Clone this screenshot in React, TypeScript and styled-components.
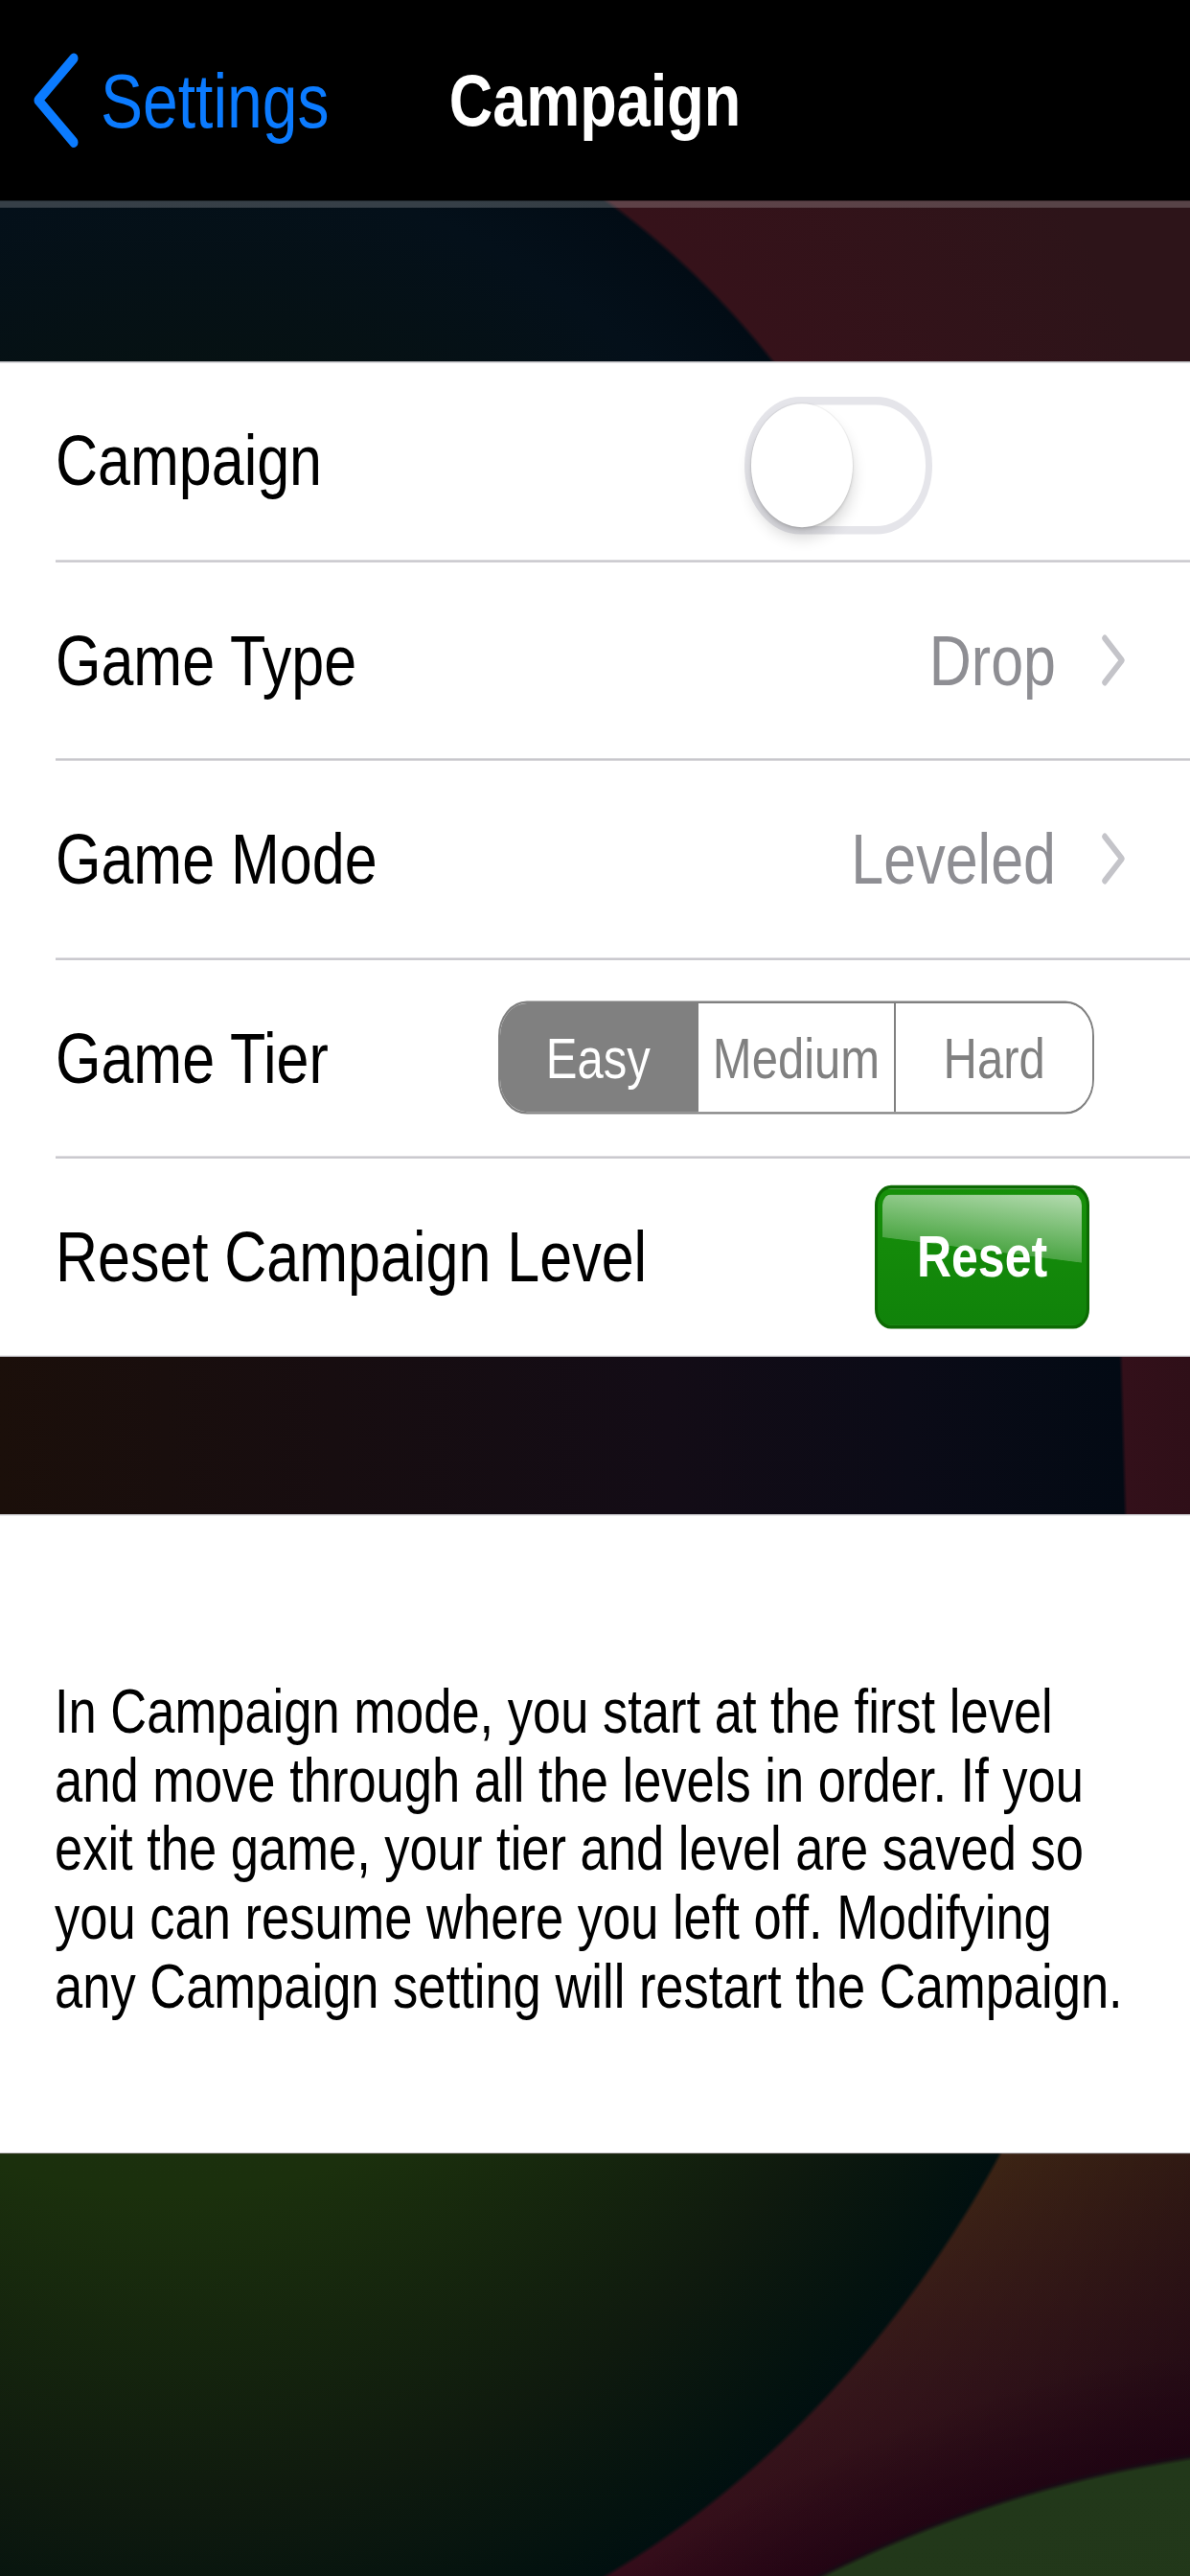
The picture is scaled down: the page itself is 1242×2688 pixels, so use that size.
import React from 'react'
import styled, { createGlobalStyle } from 'styled-components'

// the screen is laid out at 1242x2208 and stretched to fill the 2688px tall display
const STRETCH = 2688 / 2208
const SEPARATOR = '#c8c7cc'

const GlobalStyle = createGlobalStyle`
  html, body {
    margin: 0;
    padding: 0;
    background: #000;
  }
  body {
    font-family: 'Liberation Sans', Arial, Helvetica, sans-serif;
    -webkit-font-smoothing: antialiased;
  }
  * {
    box-sizing: border-box;
  }
`

const Page = styled.div`
  width: 1242px;
  height: 2688px;
  overflow: hidden;
  background: #000;
`

const Screen = styled.div`
  width: 1242px;
  height: 2208px;
  display: flex;
  flex-direction: column;
  transform: scaleY(${STRETCH});
  transform-origin: top left;
`

const NavBar = styled.header`
  flex: none;
  height: 172px;
  display: grid;
  grid-template-columns: 1fr auto 1fr;
  align-items: center;
  background: #000;
`

const BackButton = styled.button`
  justify-self: start;
  display: flex;
  align-items: center;
  gap: 22px;
  margin-left: 31px;
  padding: 0;
  border: none;
  background: none;
  color: #0b7bff;
  font-family: inherit;
  font-size: 66px;
  cursor: pointer;
`

const Title = styled.h1`
  margin: 0;
  color: #fff;
  font-size: 63px;
  font-weight: 700;
`

// wallpaper strips that show between the grouped sections
const TopBand = styled.div`
  flex: none;
  height: 138px;
  box-shadow: inset 0 6px 0 rgba(255, 255, 255, 0.2);
  background: radial-gradient(
    circle at 209px 715px,
    #0b1510 0,
    #07120f 480px,
    #04101a 740px,
    #020c15 829px,
    #36121a 833px,
    #2d1419 1150px
  );
`

const MidBand = styled.div`
  flex: none;
  height: 135.5px;
  background: linear-gradient(
    88deg,
    #1b0f0a 0,
    #170d10 350px,
    #130c16 700px,
    #0b0b17 950px,
    #030a14 1172px,
    #33101a 1176px,
    #2f0f18 100%
  );
`

const BottomBand = styled.div`
  flex: 1;
  background:
    radial-gradient(
      circle at 1428px 1748px,
      #1d3214 0,
      #22381a 1496px,
      #190b14 1500px,
      rgba(26, 0, 16, 0.55) 1503px,
      rgba(26, 0, 16, 0) 1590px
    ),
    radial-gradient(
      circle at 174px -575px,
      #1c330f 0,
      #1b300d 610px,
      #0f1a0e 875px,
      #03120f 1010px,
      #011010 1041px,
      rgba(20, 0, 16, 0) 1045px,
      rgba(20, 0, 16, 0.45) 1300px,
      rgba(20, 0, 16, 0.7) 1600px
    ),
    linear-gradient(to bottom, #3c2414 0, #35161a 200px, #340c1a 362px);
`

const Group = styled.section`
  flex: none;
  background: #fff;
  border-top: 1px solid ${SEPARATOR};
  border-bottom: 1px solid ${SEPARATOR};
`

const Row = styled.div`
  padding-left: 58px;
`

const RowBody = styled.div<{ $last?: boolean }>`
  height: ${p => (p.$last ? 168.5 : 170.5)}px;
  display: flex;
  align-items: center;
  justify-content: space-between;
  border-bottom: ${p => (p.$last ? 'none' : `2px solid ${SEPARATOR}`)};
`

const Label = styled.span`
  color: #000;
  font-size: 61px;
`

const Trailing = styled.div<{ $inset: number; $drop?: number }>`
  display: flex;
  align-items: center;
  margin-right: ${p => p.$inset}px;
  margin-top: ${p => p.$drop ?? 0}px;
`

const Value = styled.span`
  color: #8e8e93;
  font-size: 61px;
  margin-right: 45px;
`

const Track = styled.div<{ $on?: boolean }>`
  width: 196px;
  height: 118px;
  display: flex;
  align-items: center;
  justify-content: ${p => (p.$on ? 'flex-end' : 'flex-start')};
  border: 7px solid ${p => (p.$on ? '#4cd964' : '#e5e5ea')};
  border-radius: 59px;
  background: ${p => (p.$on ? '#4cd964' : '#fff')};
`

const Knob = styled.span`
  flex: none;
  width: 106px;
  height: 106px;
  border-radius: 50%;
  background: #fff;
  box-shadow:
    0 9px 14px rgba(0, 0, 0, 0.16),
    0 2px 3px rgba(0, 0, 0, 0.1),
    0 0 0 1px rgba(0, 0, 0, 0.04);
`

const Segmented = styled.div`
  width: 622px;
  height: 97px;
  display: flex;
  overflow: hidden;
  border: 2.5px solid #808080;
  border-radius: 30px;
`

const Segment = styled.button<{ $active?: boolean }>`
  flex: 1;
  display: flex;
  align-items: center;
  justify-content: center;
  padding: 0;
  border: none;
  background: ${p => (p.$active ? '#808080' : '#fff')};
  color: ${p => (p.$active ? '#fff' : '#808080')};
  font-family: inherit;
  font-size: 49px;
  cursor: pointer;

  & + & {
    border-left: 2.5px solid #808080;
  }
`

const ResetButton = styled.button`
  width: 224px;
  height: 123px;
  display: flex;
  align-items: center;
  justify-content: center;
  padding: 5px;
  border: 3px solid #0c6a03;
  border-radius: 17px;
  background:
    linear-gradient(
        186deg,
        rgba(255, 255, 255, 0.68) 0%,
        rgba(255, 255, 255, 0.24) 45%,
        rgba(255, 255, 255, 0) 45.5%
      )
      content-box,
    linear-gradient(to bottom, #17900a, #10820a) border-box;
  color: #fff;
  font-family: inherit;
  font-size: 50px;
  font-weight: 700;
  cursor: pointer;
`

const Note = styled.section`
  flex: none;
  padding: 138px 55px 113px 57px;
  background: #fff;
  border-top: 1px solid ${SEPARATOR};
  border-bottom: 1px solid ${SEPARATOR};
  color: #000;
  font-size: 52.5px;
  line-height: 59px;
`

function BackChevron() {
  return (
    <svg width='52' height='84' viewBox='0 0 52 84' fill='none'>
      <path
        d='M46 6 L9 42 L46 78'
        stroke='currentColor'
        strokeWidth='9'
        strokeLinecap='round'
        strokeLinejoin='round'
      />
    </svg>
  )
}

function Disclosure() {
  return (
    <svg width='30' height='48' viewBox='0 0 30 48' fill='none'>
      <path
        d='M6 5 L24 24 L6 43'
        stroke='#c4c4c9'
        strokeWidth='5.5'
        strokeLinecap='round'
        strokeLinejoin='round'
      />
    </svg>
  )
}

function SettingsRow({
  label,
  last,
  children,
}: {
  label: string
  last?: boolean
  children: React.ReactNode
}) {
  return (
    <Row>
      <RowBody $last={last}>
        <Label>{label}</Label>
        {children}
      </RowBody>
    </Row>
  )
}

const tiers = ['Easy', 'Medium', 'Hard']

export default function App() {
  const [campaignOn, setCampaignOn] = React.useState(false)
  const [tier, setTier] = React.useState('Easy')

  return (
    <>
      <GlobalStyle />
      <Page>
        <Screen>
          <NavBar>
            <BackButton>
              <BackChevron />
              Settings
            </BackButton>
            <Title>Campaign</Title>
            <span />
          </NavBar>

          <TopBand />

          <Group>
            <SettingsRow label='Campaign'>
              <Trailing
                $inset={269}
                $drop={7}
              >
                <Track
                  $on={campaignOn}
                  onClick={() => setCampaignOn(!campaignOn)}
                >
                  <Knob />
                </Track>
              </Trailing>
            </SettingsRow>
            <SettingsRow label='Game Type'>
              <Trailing $inset={65}>
                <Value>Drop</Value>
                <Disclosure />
              </Trailing>
            </SettingsRow>
            <SettingsRow label='Game Mode'>
              <Trailing $inset={65}>
                <Value>Leveled</Value>
                <Disclosure />
              </Trailing>
            </SettingsRow>
            <SettingsRow label='Game Tier'>
              <Trailing $inset={100}>
                <Segmented>
                  {tiers.map(t => (
                    <Segment
                      key={t}
                      $active={t === tier}
                      onClick={() => setTier(t)}
                    >
                      {t}
                    </Segment>
                  ))}
                </Segmented>
              </Trailing>
            </SettingsRow>
            <SettingsRow
              label='Reset Campaign Level'
              last
            >
              <Trailing $inset={105}>
                <ResetButton>Reset</ResetButton>
              </Trailing>
            </SettingsRow>
          </Group>

          <MidBand />

          <Note>
            In Campaign mode, you start at the first level and move through all the levels in order.
            If you exit the game, your tier and level are saved so you can resume where you left off.
            Modifying any Campaign setting will restart the Campaign.
          </Note>

          <BottomBand />
        </Screen>
      </Page>
    </>
  )
}
